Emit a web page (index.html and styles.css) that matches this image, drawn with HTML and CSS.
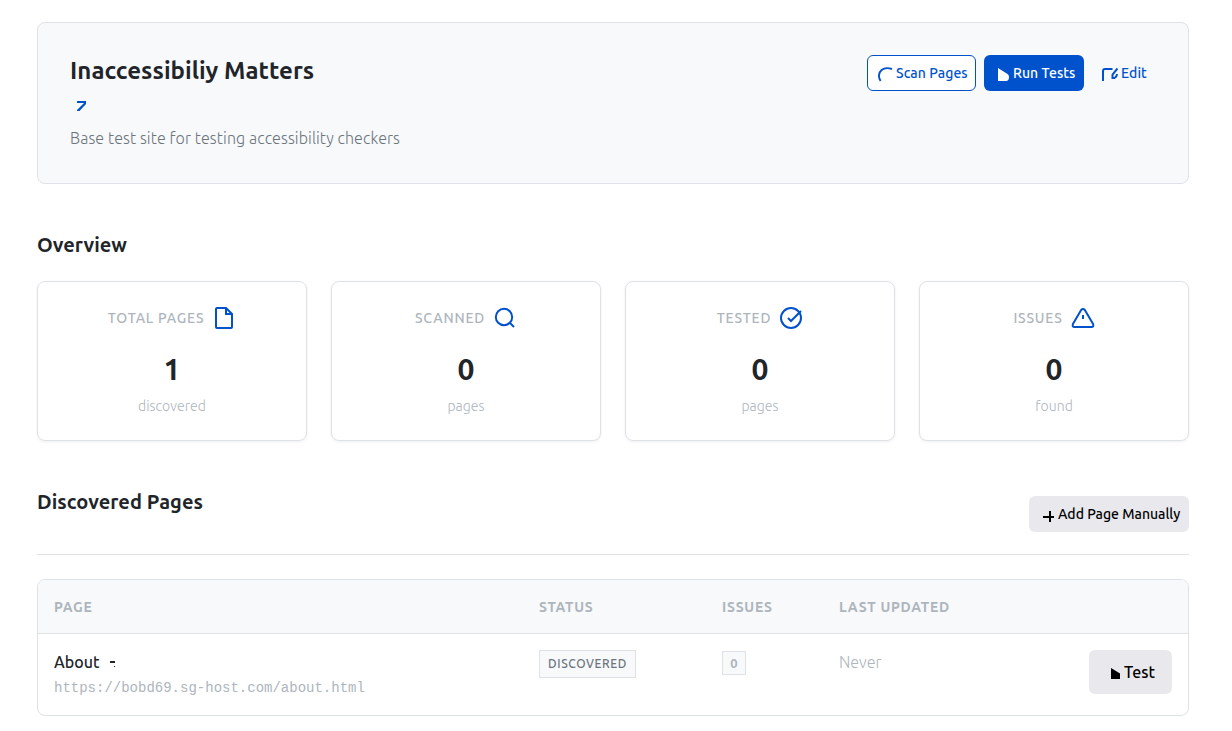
FILE: index.html
```html
<!DOCTYPE html>
<html lang="en">
<head>
<meta charset="utf-8">
<title>Inaccessibiliy Matters</title>
<link rel="stylesheet" href="styles.css">
</head>
<body>
<main class="page">
  <header class="site">
    <div class="site-info">
      <h1 class="site-name">Inaccessibiliy Matters</h1>
      <a class="site-link" href="#" aria-label="Open site"><svg width="12" height="12" viewBox="0 0 12 12" fill="currentColor"><path d="M1 1H10V4L3.5 11H1V10L8 3H1Z"/></svg></a>
      <p class="site-desc">Base test site for testing accessibility checkers</p>
    </div>
    <div class="actions">
      <button class="btn btn-outline"><svg width="16" height="16" viewBox="0 0 16 16" fill="none" stroke="currentColor" stroke-width="1.9"><path d="M3.6 15C1 11.5 1.6 6.5 4.6 4Q8.5 .8 15 3"/></svg><span>Scan Pages</span></button>
      <button class="btn btn-primary"><svg width="12" height="14" viewBox="0 0 12 14" fill="currentColor"><path d="M0 1L9.5 7Q11 8 11 10Q11 14 8 14H0Z"/></svg><span>Run Tests</span></button>
      <button class="btn btn-ghost"><svg width="16" height="14" viewBox="0 0 16 14" fill="none" stroke="currentColor" stroke-width="2"><path d="M1 14V4Q1 2 3 2H10.5M15.5 1.5L10.5 7.5V11H12.5Q15 9.5 15 7"/></svg><span>Edit</span></button>
    </div>
  </header>

  <h2 class="heading overview">Overview</h2>
  <section class="stats">
    <article class="card">
      <div class="card-top"><span class="label">Total Pages</span><svg width="24" height="24" viewBox="0 0 24 24" fill="none" stroke="currentColor" stroke-width="2"><path d="M14 2H5Q4 2 4 3V21Q4 22 5 22H19Q20 22 20 21V8ZM14 2V8H20"/></svg></div>
      <strong class="value">1</strong><span class="unit">discovered</span>
    </article>
    <article class="card">
      <div class="card-top"><span class="label">Scanned</span><svg width="24" height="24" viewBox="0 0 24 24" fill="none" stroke="currentColor" stroke-width="2"><circle cx="11" cy="11" r="8.2"/><path d="M17 17L21 21"/></svg></div>
      <strong class="value">0</strong><span class="unit">pages</span>
    </article>
    <article class="card">
      <div class="card-top"><span class="label">Tested</span><svg width="24" height="24" viewBox="0 0 24 24" fill="none" stroke="currentColor" stroke-width="2"><circle cx="12" cy="12" r="10"/><path d="M9 12L12 15L22 5"/></svg></div>
      <strong class="value">0</strong><span class="unit">pages</span>
    </article>
    <article class="card">
      <div class="card-top"><span class="label">Issues</span><svg width="24" height="24" viewBox="0 0 24 24" fill="none" stroke="currentColor" stroke-width="2" stroke-linejoin="round"><path d="M10.3 3.8L1.9 18Q1 21 3.5 21H20.5Q23 21 22.1 18L13.7 3.8Q12 2 10.3 3.8ZM12 9V13"/></svg></div>
      <strong class="value">0</strong><span class="unit">found</span>
    </article>
  </section>

  <div class="pages-head">
    <h2 class="heading heading-pages">Discovered Pages</h2>
    <button class="btn btn-gray"><svg width="11" height="12" viewBox="0 0 11 12" fill="none" stroke="currentColor" stroke-width="2"><path d="M0 7H11M7 1V12"/></svg><span>Add Page Manually</span></button>
  </div>

  <section class="table">
    <div class="row row-head"><span>Page</span><span>Status</span><span>Issues</span><span>Last Updated</span><span></span></div>
    <div class="row row-body">
      <div>
        <div class="page-name"><span>About</span><svg width="6" height="7" viewBox="0 0 6 7" fill="currentColor"><path d="M0 1H5V3H0ZM4 6H5V7H4Z"/></svg></div>
        <div class="page-url">https://bobd69.sg-host.com/about.html</div>
      </div>
      <div><span class="badge">Discovered</span></div>
      <div><span class="count">0</span></div>
      <div class="never">Never</div>
      <div><button class="btn-test"><svg width="10" height="11" viewBox="0 0 10 11" fill="currentColor"><path d="M0 0L9 5.5V11H0Z"/></svg><span>Test</span></button></div>
    </div>
  </section>
</main>
</body>
</html>
```
FILE: styles.css
```css
* { box-sizing: border-box; }
body { margin: 0; background: #fff; color: #212529; font-family: Ubuntu, "Noto Sans", "Open Sans", sans-serif; font-size: 16px; line-height: 24px; }
h1, h2, p { margin: 0; }
svg { display: block; flex: none; }
span { white-space: nowrap; }
button { font-family: inherit; margin: 0; padding: 0; border: 0; }
.page { padding: 22px 43px 0 37px; }

.site { display: flex; justify-content: space-between; height: 162px; padding: 32px; border: 1px solid #dee2e6; border-radius: 8px; background: #f8f9fb; }
.site-name { font-size: 24px; line-height: 32px; font-weight: 600; letter-spacing: 0.06px; }
.site-link { display: block; padding: 13px 0 0 6px; height: 36px; color: #0052cc; }
.site-desc { color: #6c757d; font-weight: 300; line-height: 24px; letter-spacing: 0.1px; white-space: nowrap; margin-top: 3px; }
.actions { display: flex; gap: 8px; }
.btn { display: flex; align-items: center; height: 36px; border-radius: 6px; font-size: 14px; line-height: 20px; font-weight: 500; }
.btn-outline { width: 109px; padding-left: 9px; gap: 3px; border: 1px solid #0052cc; background: #fff; color: #0052cc; letter-spacing: 0.08px; }
.btn-primary { width: 100px; padding-left: 14px; gap: 3px; background: #0052cc; color: #fff; letter-spacing: 0.08px; }
.btn-ghost { width: 64px; padding-left: 10px; gap: 3px; background: transparent; color: #0052cc; letter-spacing: 0.1px; }
.btn-outline svg, .btn-primary svg, .btn-ghost svg { position: relative; top: 1px; }
.btn-gray svg { position: relative; top: 2px; }

.heading { font-size: 20px; line-height: 24px; font-weight: 600; }
.heading-pages { letter-spacing: 0.06px; }
.overview { margin: 49px 0 24px; }
.stats { display: grid; grid-template-columns: repeat(4, 1fr); gap: 24px; }
.card { display: flex; flex-direction: column; align-items: center; height: 160px; padding-top: 24px; border: 1px solid #dee2e6; border-radius: 8px; box-shadow: 0 1px 3px rgba(0, 0, 0, 0.07); }
.card-top { display: flex; align-items: center; gap: 8px; height: 24px; color: #0052cc; }
.label { color: #adb5bd; font-size: 14px; font-weight: 500; text-transform: uppercase; letter-spacing: 0.8px; }
.value { margin-top: 21px; font-size: 30px; line-height: 36px; font-weight: 700; }
.unit { margin-top: 7px; color: #adb5bd; font-size: 14px; font-weight: 300; letter-spacing: 0.08px; }

.pages-head { display: flex; justify-content: space-between; height: 65px; margin-top: 49px; border-bottom: 1px solid #dee2e6; }
.pages-head .btn { margin-top: 6px; }
.btn-gray { width: 160px; padding-left: 14px; gap: 4px; background: #e9e8ed; color: #000; }

.table { margin-top: 24px; border: 1px solid #dee2e6; border-radius: 8px; overflow: hidden; }
.row { display: grid; grid-template-columns: 485px 183px 117px 1fr 83px; padding: 0 16px; }
.row-head { height: 54px; align-items: center; border-bottom: 1px solid #dee2e6; background: #f8f9fb; color: #adb5bd; font-size: 14px; font-weight: 600; text-transform: uppercase; letter-spacing: 0.75px; }
.row-body { height: 81px; padding-top: 16px; align-items: start; }
.page-name { display: flex; align-items: center; gap: 10px; font-weight: 500; }
.page-name svg { margin-top: 3px; }
.page-url { font-family: "Liberation Mono", monospace; font-size: 14px; line-height: 20px; color: #adb5bd; margin-top: 4px; white-space: nowrap; }
.badge { display: flex; align-items: center; justify-content: center; width: 97px; height: 28px; border: 1px solid #dee2e6; background: #f8f9fb; color: #6c757d; font-size: 12px; font-weight: 500; text-transform: uppercase; letter-spacing: 0.6px; }
.count { display: flex; align-items: center; justify-content: center; width: 24px; height: 24px; margin-top: 1px; border: 1px solid #dee2e6; background: #f8f9fb; color: #adb5bd; font-size: 13px; font-weight: 700; }
.never { color: #adb5bd; font-weight: 300; }
.btn-test { display: flex; align-items: center; gap: 3px; width: 83px; height: 44px; padding-left: 22px; border-radius: 6px; background: #e9e8ed; color: #000; font-size: 16px; font-weight: 500; }
.btn-test svg { margin-top: 3px; }
```
